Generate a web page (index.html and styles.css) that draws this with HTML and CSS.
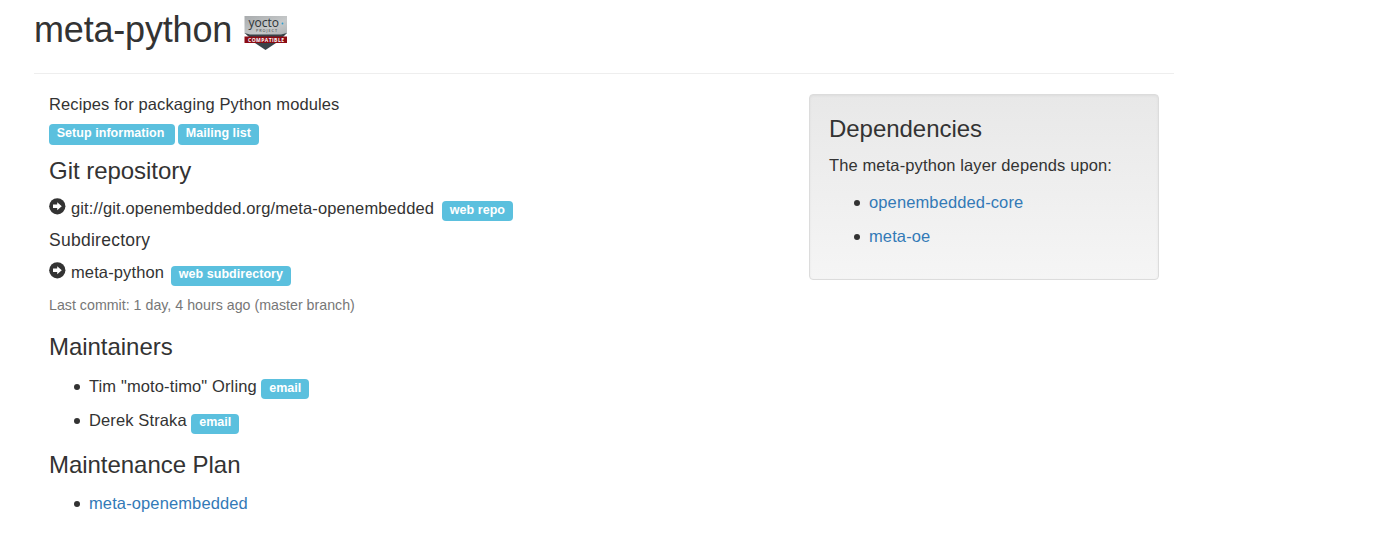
FILE: index.html
```html
<!DOCTYPE html>
<html lang="en"><head><meta charset="utf-8"><title>meta-python</title><link rel="stylesheet" href="styles.css"></head>
<body>
<main class="page">
<header class="page-header">
<h1>meta-python</h1>
<svg class="badge" width="44" height="36" viewBox="0 0 44 36">
<defs><linearGradient id="g" x1="0" y1="0" x2="1" y2="1"><stop offset="0" stop-color="#a8abad"/><stop offset=".6" stop-color="#c6c9ca"/><stop offset="1" stop-color="#afb3b5"/></linearGradient></defs>
<path d="M.5 1H43V18.500L39 20H5L.5 18.500Z" fill="url(#g)"/><path d="M.5 18L6 19.500H37L43 18L39 22H5Z" fill="#394349"/><path d="M.5 21.500H43V28H.5Z" fill="#8b0b14"/><path d="M11 28H32L21.500 35Z" fill="#394349"/>
<text x="4.500" y="12" textLength="30.500" lengthAdjust="spacingAndGlyphs" class="yocto">yocto</text><circle cx="38.500" cy="8.500" r=".9" fill="#2c9ed0"/><text x="12" y="16.700" textLength="21" class="project">PROJECT</text><text x="4" y="26.600" textLength="36" class="compatible">COMPATIBLE</text></svg>
</header>
<div class="columns">
<section class="details">
<p class="summary">Recipes for packaging Python modules</p>
<div class="tags"><a class="label setup">Setup information</a><a class="label list">Mailing list</a></div>
<h2 class="git-title">Git repository</h2>
<div class="repo"><svg class="arrow" width="17" height="17" viewBox="0 0 17 17"><circle cx="8.300" cy="8.300" r="8.100" fill="#333"/><path d="M4 6.500H8.200V4.300L12.800 8.300L8.200 12.300V10.100H4Z" fill="#fff"/></svg><span>git://git.openembedded.org/meta-openembedded</span><a class="label">web repo</a></div>
<h3>Subdirectory</h3>
<div class="repo subdir"><svg class="arrow" width="17" height="17" viewBox="0 0 17 17"><circle cx="8.300" cy="8.300" r="8.100" fill="#333"/><path d="M4 6.500H8.200V4.300L12.800 8.300L8.200 12.300V10.100H4Z" fill="#fff"/></svg><span>meta-python</span><a class="label raised">web subdirectory</a></div>
<p class="commit">Last commit: 1 day, 4 hours ago (master branch)</p>
<h2 class="maintainers">Maintainers</h2>
<ul><li>Tim "moto-timo" Orling <a class="label">email</a></li><li>Derek Straka <a class="label raised">email</a></li></ul>
<h2 class="plan">Maintenance Plan</h2>
<ul><li><a class="link">meta-openembedded</a></li></ul>
</section>
<aside class="well"><h2>Dependencies</h2><p>The meta-python layer depends upon:</p><ul><li><a class="link">openembedded-core</a></li><li><a class="link">meta-oe</a></li></ul></aside>
</div>
</main>
</body></html>
```
FILE: styles.css
```css
*{box-sizing:border-box}
body{margin:0;background:#fff;color:#333;font:16.5px/24px "Liberation Sans",Arial,sans-serif;letter-spacing:.12px;overflow:hidden}
h1,h2,h3,p,ul{margin:0;font-weight:400}
.page{width:1140px;margin-left:34px}
.page-header{height:74px;border-bottom:1px solid #eee;display:flex;align-items:flex-start}
h1{font-size:36px;line-height:40px;padding-top:10px;letter-spacing:-.18px}
.badge{margin:15px 0 0 12px;overflow:visible;letter-spacing:0}
.yocto{font:12.500px "Open Sans",sans-serif;fill:#2c3337}
.project{font:3.800px "Open Sans",sans-serif;fill:#333}
.compatible{font:bold 5px "Open Sans",sans-serif;fill:#fff}
.columns{display:flex;justify-content:space-between;align-items:flex-start;padding:18px 15px 0}
.summary{height:32px}
.label{display:inline-block;background:#5bc0de;color:#fff;font-weight:700;font-size:12.500px;line-height:13px;letter-spacing:.05px;border-radius:4px;height:20px;padding:3px 7.700px 4px;vertical-align:top;margin-top:5px}
.label.raised{padding-top:2px;margin-top:6px}
.label.setup{width:126px}
.label.list{width:81px}
.tags{display:flex;gap:3px;height:20px}
.tags .label{margin-top:0;height:21px}
h2{font-size:24px;line-height:28px;letter-spacing:-.04px}
.git-title{margin-top:13px}
.repo{display:flex;height:24px;margin-top:11px}
.repo span{margin:0 8px 0 5px}
.repo.subdir{margin-top:8px}
.repo.subdir span{margin-right:7px}
.arrow{margin-top:2px}
h3{font-size:17.500px;line-height:24px;letter-spacing:.26px;margin-top:8px}
.commit{font-size:14.200px;color:#777;letter-spacing:.02px;margin-top:9px}
.maintainers{margin-top:16px}
ul{padding-left:40px;margin-top:13px;list-style:none}
li{height:24px;margin-bottom:10px}
/* Bullet hangs in the list's left padding. */
li::before{content:"";display:inline-block;width:6px;height:6px;border-radius:50%;background:#333;margin:0 9px 0 -15px;vertical-align:2px}
.plan{margin-top:19px}
.plan+ul{margin-top:12px}
.well{width:350px;height:186px;margin-top:2px;border:1px solid #dcdcdc;border-radius:4px;background:linear-gradient(#e8e8e8,#f5f5f5);box-shadow:inset 0 1px 3px rgba(0,0,0,.05);padding:20px 19px}
.well p{margin-top:10px}
.link{color:#337ab7}
```
